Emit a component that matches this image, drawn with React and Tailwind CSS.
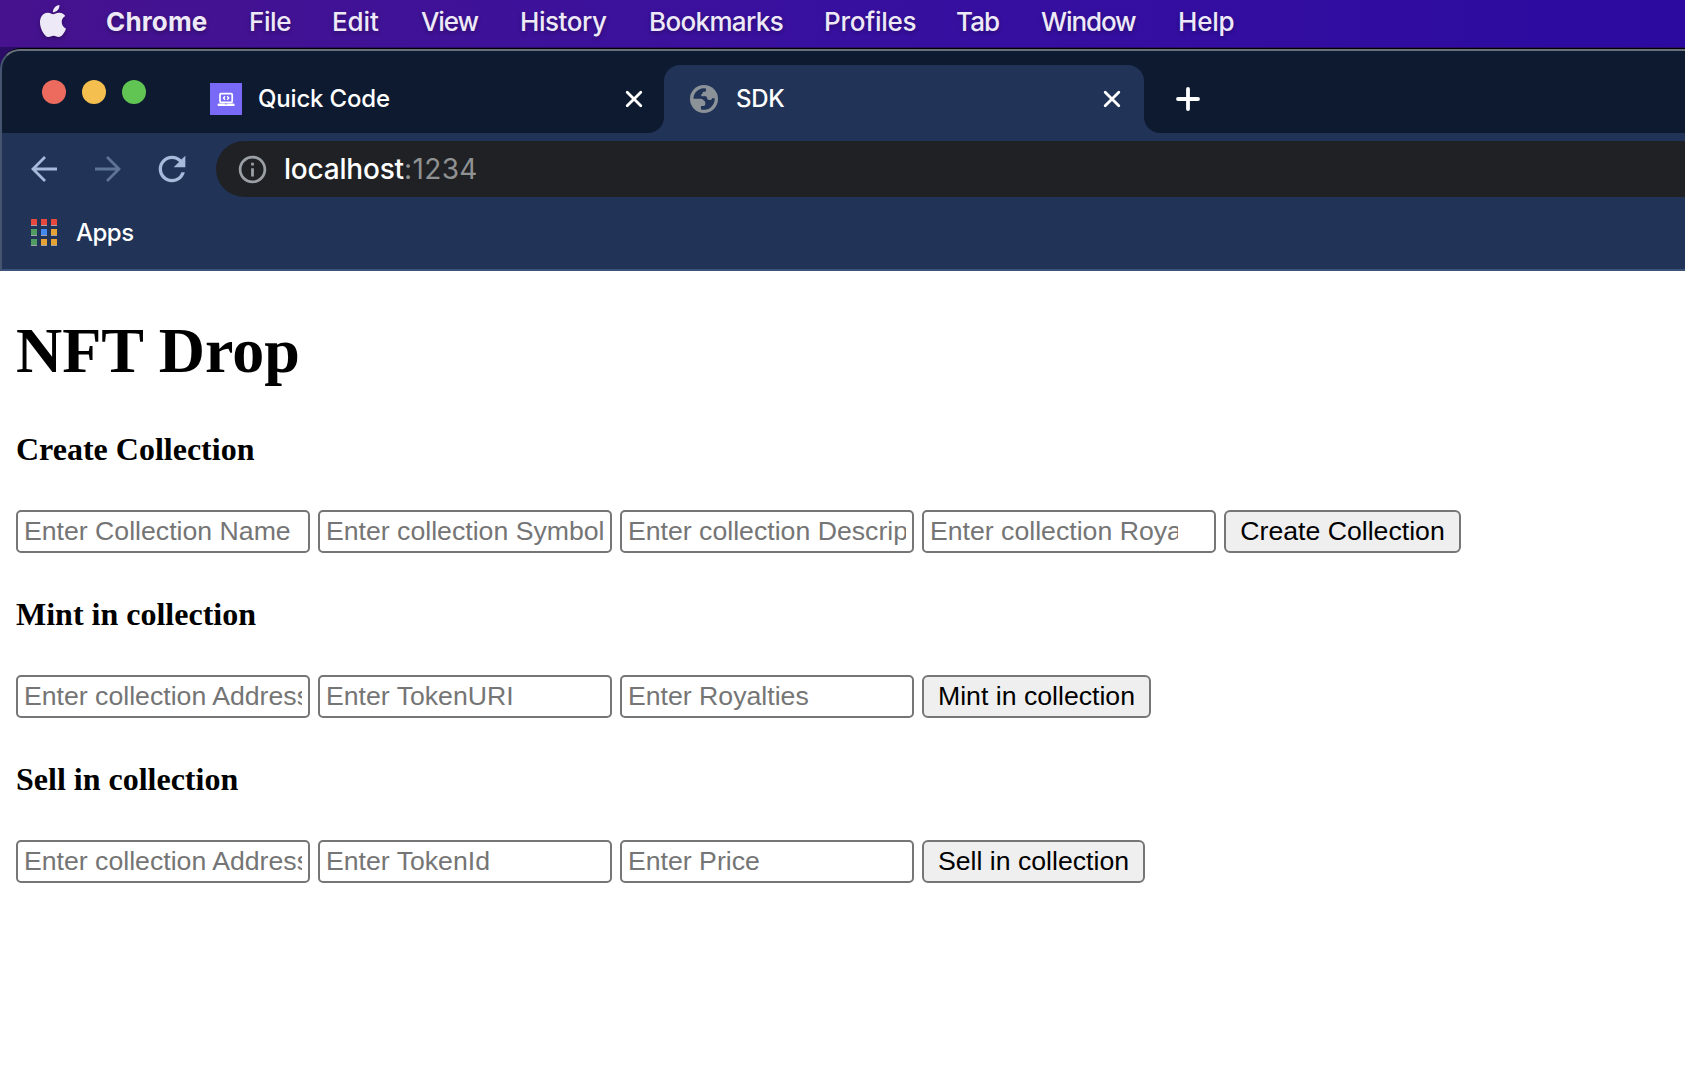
import React from "react";
import { SiApple } from "react-icons/si";
import { MdRefresh, MdInfoOutline } from "react-icons/md";

const MENUS = [
  { label: "Chrome", className: "w-[143px] font-bold tracking-[0.15px]" },
  { label: "File", className: "w-[83px] font-medium tracking-[-0.4px]" },
  { label: "Edit", className: "w-[89px] font-medium tracking-[-0.1px]" },
  { label: "View", className: "w-[99px] font-medium tracking-[-1.1px]" },
  { label: "History", className: "w-[129px] font-medium tracking-[-0.45px]" },
  { label: "Bookmarks", className: "w-[175px] font-medium tracking-[-0.65px]" },
  { label: "Profiles", className: "w-[132px] font-medium tracking-[-0.25px]" },
  { label: "Tab", className: "w-[85px] font-medium tracking-[-0.9px]" },
  { label: "Window", className: "w-[137px] font-medium tracking-[-1.1px]" },
  { label: "Help", className: "w-[60px] font-medium tracking-[-0.2px]" },
];

const APP_DOTS = [
  "bg-[#e8493e]", "bg-[#e8493e]", "bg-[#e8493e]",
  "bg-[#4f9d61]", "bg-[#4589f0]", "bg-[#e5a336]",
  "bg-[#4f9d61]", "bg-[#e5a336]", "bg-[#e5a336]",
];

const SECTIONS = [
  {
    title: "Create Collection",
    fields: [
      { placeholder: "Enter Collection Name" },
      { placeholder: "Enter collection Symbol" },
      { placeholder: "Enter collection Description" },
      { placeholder: "Enter collection Royalties", spinner: true },
    ],
    buttonWidth: "w-[237px]",
  },
  {
    title: "Mint in collection",
    fields: [
      { placeholder: "Enter collection Address" },
      { placeholder: "Enter TokenURI" },
      { placeholder: "Enter Royalties" },
    ],
    buttonWidth: "w-[229px]",
  },
  {
    title: "Sell in collection",
    fields: [
      { placeholder: "Enter collection Address" },
      { placeholder: "Enter TokenId" },
      { placeholder: "Enter Price" },
    ],
    buttonWidth: "w-[223px]",
  },
];

function MenuBar() {
  return (
    <div className="flex h-[47px] items-start bg-linear-to-r from-[#46128e] via-[#3810a0] to-[#2c0aa0] pl-[37px] text-[#eee9f7]">
      <SiApple className="mt-[5px] mr-[37px] size-8 shrink-0 drop-shadow-[0_2px_2px_rgba(0,0,0,0.3)]" />
      {MENUS.map((m) => (
        <span
          key={m.label}
          className={"shrink-0 text-[26px] leading-[44px] whitespace-nowrap [text-shadow:0_2px_4px_rgba(0,0,0,0.3)] " + m.className}
        >
          {m.label}
        </span>
      ))}
    </div>
  );
}

function CloseIcon() {
  return (
    <svg viewBox="0 0 18 18" className="size-[18px] shrink-0" stroke="#fff" strokeWidth="2.8" strokeLinecap="round">
      <path d="M2.2 2.2 15.8 15.8M15.8 2.2 2.2 15.8" />
    </svg>
  );
}

function LaptopIcon() {
  return (
    <svg viewBox="0 0 32 32" className="size-8 shrink-0 bg-[#7869f6]" fill="none">
      <rect x="10" y="10.7" width="12.2" height="8.6" rx="1" stroke="#fff" strokeWidth="1.7" />
      <path d="M15 13.2 13.5 15l1.5 1.8M17.2 13.2l1.5 1.8-1.5 1.8" stroke="#fff" strokeWidth="1.4" />
      <rect x="7.6" y="20.6" width="17" height="2.5" rx="1.2" fill="#fff" />
      <path d="M14.8 20.9h2.6" stroke="#7869f6" strokeWidth="0.7" />
    </svg>
  );
}

function GlobeIcon() {
  return (
    <svg viewBox="0 0 28 28" className="size-7 shrink-0">
      <circle cx="14" cy="14" r="14" fill="#8b9298" />
      <path
        fill="#213356"
        d="M3.3 13.8A10.8 10.8 0 0 1 11.5 3.4Q13.8 2.9 16 3.4V5.6Q16 6.8 14.8 6.8H13.6Q12.6 6.8 12.6 8Q12.6 9 11.3 9.2V11.3H15.6Q17 11.4 17 13Q17.3 14.9 19 15H20.6Q22 14.9 22 13.3H24.7A10.8 10.8 0 0 1 11 24.4V21H13.6Q15.3 20.9 15.3 19.2V17.4Q15.2 16 13.8 15.6Q12.8 13.8 11 13.8Z"
      />
    </svg>
  );
}

function TabStrip() {
  return (
    <div className="flex h-[82px] items-end">
      <div className="flex h-[82px] shrink-0 gap-4 pt-[29px] pl-10">
        <span className="size-6 rounded-full bg-[#ed6a5e]" />
        <span className="size-6 rounded-full bg-[#f5bf4f]" />
        <span className="size-6 rounded-full bg-[#61c554]" />
      </div>
      <div className="flex h-[68px] w-[518px] shrink-0 items-center pl-16">
        <LaptopIcon />
        <span className="ml-4 grow text-[24px] font-medium tracking-[-0.17px]">Quick Code</span>
        <CloseIcon />
        <svg viewBox="0 0 16 16" className="ml-[5px] size-4 shrink-0 self-end" fill="#213356">
          <path d="M16 0v16H0A16 16 0 0 0 16 0z" />
        </svg>
      </div>
      <div className="flex h-[68px] w-[480px] shrink-0 items-center rounded-t-2xl bg-[#213356] pr-[23px] pl-[26px]">
        <GlobeIcon />
        <span className="ml-[18px] grow text-[24px] font-medium tracking-[-0.3px]">SDK</span>
        <CloseIcon />
      </div>
      <svg viewBox="0 0 16 16" className="size-4 shrink-0" fill="#213356">
        <path d="M0 0v16h16A16 16 0 0 1 0 0z" />
      </svg>
      <div className="flex h-[68px] items-center pl-4">
        <svg viewBox="0 0 24 24" className="size-6" stroke="#fff" strokeWidth="3.8" strokeLinecap="round">
          <path d="M12 2v20M2 12h20" />
        </svg>
      </div>
    </div>
  );
}

function Toolbar() {
  return (
    <div className="flex h-[72px] items-center bg-[#213356] pl-[29px]">
      <svg viewBox="0 0 26 26" className="size-[26px] shrink-0" fill="none" stroke="#a8badb" strokeWidth="2.8">
        <path d="M26 13H2.5M14 1 2 13l12 12" />
      </svg>
      <svg viewBox="0 0 26 26" className="ml-[38px] size-[26px] shrink-0" fill="none" stroke="#5f7397" strokeWidth="2.8">
        <path d="M0 13h23.5M12 1l12 12-12 12" />
      </svg>
      <MdRefresh className="ml-[31px] size-10 shrink-0 text-[#a8badb]" />
      <div className="ml-[24px] flex h-14 grow items-center rounded-l-full bg-[#202124] pl-5">
        <MdInfoOutline className="size-[33px] shrink-0 text-[#9aa0a6]" />
        <span className="ml-[15px] text-[28px] font-medium tracking-[-0.2px]">localhost</span>
        <span className="text-[28px] tracking-[0.4px] text-[#8f9193]">:1234</span>
      </div>
    </div>
  );
}

function BookmarksBar() {
  return (
    <div className="flex h-[64px] items-start bg-[#213356] pl-[29px]">
      <div className="mt-[14px] grid grid-cols-[6px_6px_6px] gap-x-1 gap-y-[3px]">
        {APP_DOTS.map((c, i) => (
          <span key={i} className={"h-[7px] border-b border-[#a0a3ac] " + c} />
        ))}
      </div>
      <span className="ml-[19px] text-[24px] leading-[56px] font-medium tracking-[-0.5px]">Apps</span>
    </div>
  );
}

function BrowserChrome() {
  return (
    <div className="bg-[#2b0c66]">
      <div className="rounded-tl-[21px] border-t border-black bg-[#0d1a30]">
        <div className="overflow-hidden rounded-tl-[20px] border-t-2 border-b-2 border-l-2 border-t-[#66717d] border-b-[#3b5279] border-l-[#455570] text-white">
          <TabStrip />
          <Toolbar />
          <BookmarksBar />
        </div>
      </div>
    </div>
  );
}

function Section({ title, fields, buttonWidth }) {
  return (
    <section className="h-[165px]">
      <h4 className="font-['Liberation_Serif',serif] text-[32px] leading-9 font-bold">{title}</h4>
      <div className="mt-[43px] flex gap-2 font-['Liberation_Sans',sans-serif] text-[26.667px]">
        {fields.map((f) => (
          <input
            key={f.placeholder}
            placeholder={f.placeholder}
            className={
              "h-[43px] w-[294px] shrink-0 rounded-[5px] border-2 border-[#767676] bg-white pl-[6px] placeholder:text-[#757575] " +
              (f.spinner ? "pr-9" : "pr-[6px]")
            }
          />
        ))}
        <button
          className={"h-[43px] shrink-0 rounded-md border-2 border-[#767676] bg-[#efefef] leading-[39px] whitespace-nowrap " + buttonWidth}
        >
          {title}
        </button>
      </div>
    </section>
  );
}

export default function App() {
  return (
    <div className="h-[1086px] w-[1685px] overflow-hidden bg-white font-['Inter',sans-serif] text-black">
      <div className="bg-[#2b0c66] pb-px">
        <MenuBar />
      </div>
      <BrowserChrome />
      <main className="pt-[43px] pl-4">
        <h1 className="mb-11 font-['Liberation_Serif',serif] text-[64px] leading-[73px] font-bold">NFT Drop</h1>
        {SECTIONS.map((s) => (
          <Section key={s.title} {...s} />
        ))}
      </main>
    </div>
  );
}
